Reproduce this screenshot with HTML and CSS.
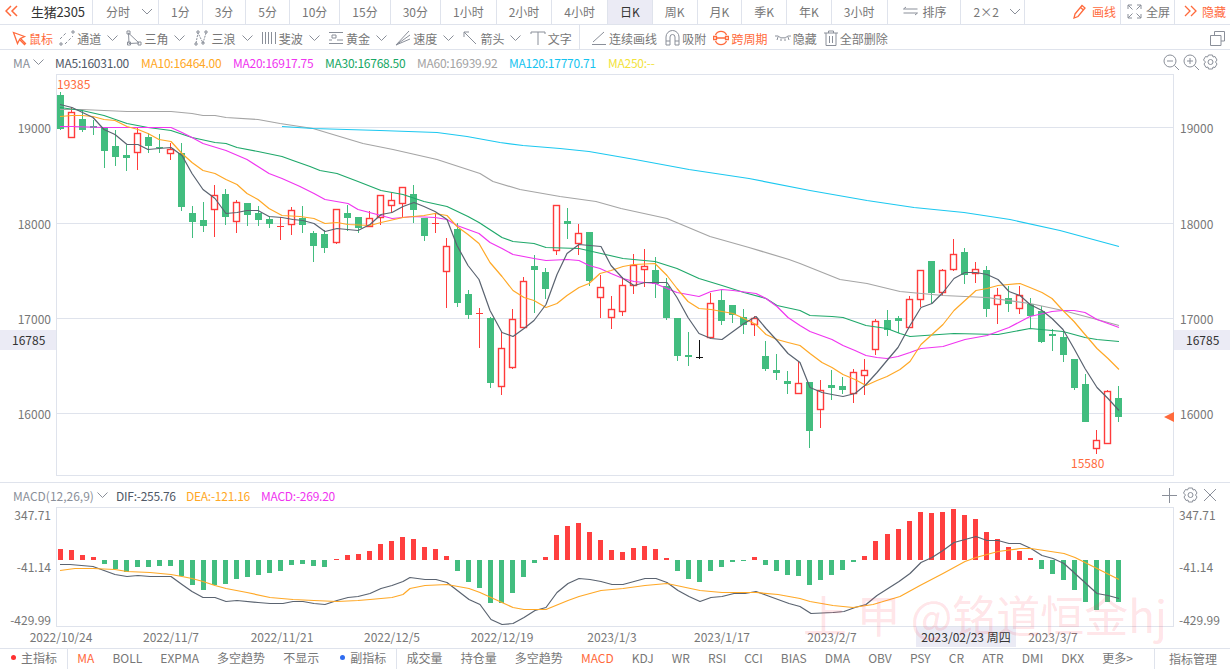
FILE: index.html
```html
<!DOCTYPE html>
<html lang="zh-CN">
<head>
<meta charset="utf-8">
<title>生猪2305</title>
<link rel="stylesheet" href="styles.css">
</head>
<body>
<div class="app">
  <header class="periods">
    <div class="name-cell">
      <svg class="ico-back" width="14" height="12" viewBox="0 0 14 12"><path d="M6 1L1 6l5 5M12 1L7 6l5 5"/></svg>
      <span class="name">生猪2305</span>
    </div>
    <div class="tab tab-wide">分时<svg class="chev chev-tab" width="12" height="7" viewBox="0 0 12 7"><path d="M1 1l5 5 5-5"/></svg></div>
    <div class="tab">1分</div><div class="tab">3分</div><div class="tab">5分</div>
    <div class="tab">10分</div><div class="tab">15分</div><div class="tab">30分</div>
    <div class="tab">1小时</div><div class="tab">2小时</div><div class="tab">4小时</div>
    <div class="tab tab-active">日K</div><div class="tab">周K</div><div class="tab">月K</div><div class="tab">季K</div><div class="tab">年K</div>
    <div class="tab">3小时</div>
    <div class="tab tab-icon"><svg class="ico" width="15" height="10" viewBox="0 0 15 10"><path d="M3 1L0.5 3H14.500M12 9l2.500-2H0.5"/></svg>排序</div>
    <div class="tab tab-grid">2×2<svg class="chev" width="12" height="7" viewBox="0 0 12 7"><path d="M1 1l5 5 5-5"/></svg></div>
    <div class="periods-right">
      <div class="tab tab-orange tab-draw"><svg class="ico-o" width="15" height="15" viewBox="0 0 15 15"><path d="M3 10l7-8.500 3 2.500-7 8.500-4 1.500zM8.500 3.500l3 2.500"/></svg>画线</div>
      <div class="tab tab-full"><svg class="ico" width="15" height="15" viewBox="0 0 15 15"><path d="M1 5V1h4M10 1h4v4M14 10v4h-4M5 14H1v-4M1 1l4.500 4.500M14 1L9.500 5.500M14 14L9.500 9.500M1 14l4.500-4.500"/></svg>全屏</div>
      <div class="tab tab-orange tab-hide"><svg class="ico-o" width="14" height="12" viewBox="0 0 14 12"><path d="M2 1l5 5-5 5M8 1l5 5-5 5"/></svg>隐藏</div>
    </div>
  </header>

  <nav class="tools">
    <div class="tool tool-on tool-first"><svg class="ico-o" width="15" height="15" viewBox="0 0 15 15"><path d="M1.500 1.500l4 11 2-4 5 5 1-1-5-5 4-2z"/></svg>鼠标</div>
    <div class="tool"><svg class="ico" width="16" height="16" viewBox="0 0 16 16"><path d="M1 9l7-7M6 14l8-8" stroke-dasharray="3 2"/><path d="M13 1h2v2h-2zM1 13h2v2H1z"/></svg>通道<svg class="chev" width="11" height="7" viewBox="0 0 11 7"><path d="M.5.500l5 5 5-5"/></svg></div>
    <div class="tool"><svg class="ico" width="16" height="16" viewBox="0 0 16 16"><path d="M2.500 3L3 13.500 13 13zM1 1h3v3H1zM1.500 12h3v3h-3zM12 12h3v3h-3z"/></svg>三角<svg class="chev" width="11" height="7" viewBox="0 0 11 7"><path d="M.5.500l5 5 5-5"/></svg></div>
    <div class="tool"><svg class="ico" width="16" height="16" viewBox="0 0 16 16"><path d="M2 13L4 3l5 10 3-10" stroke-dasharray="2 1"/><path d="M1 13h2v2H1zM3 1h2v2H3zM8 12h2v2H8zM11 1h2v2h-2z"/></svg>三浪<svg class="chev" width="11" height="7" viewBox="0 0 11 7"><path d="M.5.500l5 5 5-5"/></svg></div>
    <div class="tool"><svg class="ico" width="16" height="16" viewBox="0 0 16 16"><path d="M1.500 2v12M4.500 2v12M7.500 2v12M10.500 2v12M14.500 2v12"/></svg>斐波<svg class="chev" width="11" height="7" viewBox="0 0 11 7"><path d="M.5.500l5 5 5-5"/></svg></div>
    <div class="tool"><svg class="ico" width="16" height="16" viewBox="0 0 16 16"><path d="M1 2.500h14M1 13.500h14M1 10h3M9 10h6M4 5h4v3H4z"/></svg>黄金<svg class="chev" width="11" height="7" viewBox="0 0 11 7"><path d="M.5.500l5 5 5-5"/></svg></div>
    <div class="tool"><svg class="ico" width="16" height="16" viewBox="0 0 16 16"><path d="M1 15L14 1M1 15L15 5M1 15L15 9M3 13h2"/></svg>速度<svg class="chev" width="11" height="7" viewBox="0 0 11 7"><path d="M.5.500l5 5 5-5"/></svg></div>
    <div class="tool"><svg class="ico" width="16" height="16" viewBox="0 0 16 16"><path d="M2 7V2h5M2 2l12 12"/></svg>箭头<svg class="chev" width="11" height="7" viewBox="0 0 11 7"><path d="M.5.500l5 5 5-5"/></svg></div>
    <div class="tool"><svg class="ico" width="16" height="16" viewBox="0 0 16 16"><path d="M1 2h14M8 2v13M1 2v2M15 2v2"/></svg>文字</div>
    <div class="tool-sep"></div>
    <div class="tool"><svg class="ico" width="16" height="16" viewBox="0 0 16 16"><path d="M2 12L13 2M1 14.500h14"/></svg>连续画线</div>
    <div class="tool"><svg class="ico" width="15" height="16" viewBox="0 0 15 16"><path d="M1 15V7a6.500 6.500 0 0 1 13 0v8h-4V7a2.500 2.500 0 0 0-5 0v8zM1 11h4M10 11h4"/></svg>吸附</div>
    <div class="tool tool-on tool-tight"><svg class="ico-o" width="16" height="16" viewBox="0 0 16 16"><path d="M2.500 5a6 6 0 0 1 11 0M2.500 11a6 6 0 0 0 11 0M4 8h8M.5 6.500h3v3h-3zM12.500 6.500h3v3h-3z"/></svg>跨周期</div>
    <div class="tool tool-tight"><svg class="ico" width="16" height="16" viewBox="0 0 16 16"><path d="M0 6h3c3 2.500 7 2.500 10 0h3M3 7l-1 3M6 8.500V11M10 8.500V11M13 7l1 3"/></svg>隐藏</div>
    <div class="tool tool-tight"><svg class="ico" width="14" height="16" viewBox="0 0 14 16"><path d="M0 3h14M4.500 3V1h5v2M2 3v12.500h10V3M5.500 6v7M8.500 6v7"/></svg>全部删除</div>
    <svg class="ico ico-layers" width="15" height="15" viewBox="0 0 15 15"><path d="M4.500 4V.5h10V10H11M.5 4.500H11v10H.500z"/></svg>
  </nav>

  <div class="legend">
    <span class="leg-name leg-ma">MA<svg class="chev" width="11" height="7" viewBox="0 0 11 7"><path d="M.5.500l5 5 5-5"/></svg></span>
    <span class="val c-dif w-ma5">MA5:16031.00</span>
    <span class="val c-o w-ma10">MA10:16464.00</span>
    <span class="val c-m w-ma10">MA20:16917.75</span>
    <span class="val c-g w-ma10">MA30:16768.50</span>
    <span class="val c-gray w-ma10">MA60:16939.92</span>
    <span class="val c-c w-ma120">MA120:17770.71</span>
    <span class="val c-y">MA250:--</span>
    <span class="leg-icons">
      <svg class="ico" width="17" height="17" viewBox="0 0 17 17"><circle cx="7" cy="7" r="6"/><path d="M4 7h6M11.500 11.500L16 16"/></svg>
      <svg class="ico" width="17" height="17" viewBox="0 0 17 17"><circle cx="7" cy="7" r="6"/><path d="M4 7h6M7 4v6M11.500 11.500L16 16"/></svg>
      <svg class="ico" width="15" height="16" viewBox="0 0 15 16"><path d="M5.500 1h4l.5 2 2-.5 2 3.500-1.500 2 1.500 2-2 3.500-2-.5-.5 2h-4l-.5-2-2 .5-2-3.500 1.500-2L.5 6l2-3.500 2 .5z"/><circle cx="7.500" cy="8" r="2.500"/></svg>
    </span>
  </div>
  <svg id="kchart" class="chart chart-k" width="1230" height="408" viewBox="0 74 1230 408"></svg>

  <div class="legend legend-sub">
    <span class="leg-name leg-macd">MACD(12,26,9)<svg class="chev" width="11" height="7" viewBox="0 0 11 7"><path d="M.5.500l5 5 5-5"/></svg></span>
    <span class="val c-dif w-dif">DIF:-255.76</span>
    <span class="val c-o w-dea">DEA:-121.16</span>
    <span class="val c-m">MACD:-269.20</span>
    <span class="leg-icons leg-icons-sub">
      <svg class="ico" width="15" height="15" viewBox="0 0 15 15"><path d="M0 7.500h15M7.500 0v15"/></svg>
      <svg class="ico" width="15" height="16" viewBox="0 0 15 16"><path d="M5.500 1h4l.5 2 2-.5 2 3.500-1.500 2 1.500 2-2 3.500-2-.5-.5 2h-4l-.5-2-2 .5-2-3.500 1.500-2L.5 6l2-3.500 2 .5z"/><circle cx="7.500" cy="8" r="2.500"/></svg>
      <svg class="ico" width="12" height="12" viewBox="0 0 12 12"><path d="M0 0l12 12M12 0L0 12"/></svg>
    </span>
  </div>
  <svg id="macdchart" class="chart chart-macd" width="1230" height="141" viewBox="0 507 1230 141"></svg>

  <footer class="indicators">
    <span class="dot dot-red"></span><span class="ind ind-head">主指标</span>
    <span class="ind-sep"></span>
    <span class="ind ind-on">MA</span><span class="ind">BOLL</span><span class="ind">EXPMA</span><span class="ind">多空趋势</span><span class="ind">不显示</span>
    <span class="dot dot-blue"></span><span class="ind ind-head">副指标</span>
    <span class="ind-sep"></span>
    <span class="ind">成交量</span><span class="ind">持仓量</span><span class="ind">多空趋势</span><span class="ind ind-on">MACD</span><span class="ind">KDJ</span><span class="ind">WR</span><span class="ind">RSI</span><span class="ind">CCI</span><span class="ind">BIAS</span><span class="ind">DMA</span><span class="ind">OBV</span><span class="ind">PSY</span><span class="ind">CR</span><span class="ind">ATR</span><span class="ind">DMI</span><span class="ind">DKX</span><span class="ind">更多&gt;</span>
    <span class="manage">指标管理</span>
  </footer>

  <div class="watermark">上 甲 @铭道恒金hj</div>
</div>
<script src="script.js"></script>
</body>
</html>
```
FILE: styles.css
```css
* { box-sizing: border-box; }
html, body { margin: 0; padding: 0; background: #fff; }
body {
  font-family: "Noto Sans CJK SC", "Noto Sans", sans-serif;
  font-size: 12px;
  color: #777;
  overflow: hidden;
}
.app { position: relative; width: 1230px; height: 669px; overflow: hidden; }

.ico { fill: none; stroke: #8a8f99; stroke-width: 1; flex: none; }
.ico-o { fill: none; stroke: #ff6a3c; stroke-width: 1.3; flex: none; }
.ico-back { fill: none; stroke: #ff6a3c; stroke-width: 1.5; flex: none; }
.chev { fill: none; stroke: #8a8f99; stroke-width: 1; flex: none; }

/* period tabs */
.periods {
  display: flex;
  height: 25px;
  border-bottom: 1px solid #dfe3ec;
}
.name-cell {
  display: flex;
  align-items: center;
  gap: 12px;
  width: 93px;
  padding: 0 0 2px 5px;
  border-right: 1px solid #dfe3ec;
}
.name { color: #333; font-size: 13px; letter-spacing: -.2px; }
.tab {
  display: flex;
  align-items: center;
  justify-content: center;
  padding: 0 12px 2px;
  border-right: 1px solid #dfe3ec;
  white-space: nowrap;
}
.tab-wide { width: 66px; padding-left: 13px; padding-right: 0; justify-content: flex-start; }
.chev-tab { margin-left: 11px; }
.tab-active { background: #ebebf5; color: #333; }
.tab-icon { width: 73px; padding-left: 15px; padding-right: 0; gap: 5px; justify-content: flex-start; }
.tab-grid { width: 64px; padding-left: 13px; padding-right: 0; gap: 10px; justify-content: flex-start; }
.periods-right { display: flex; margin-left: auto; }
.tab-orange { color: #ff6a3c; }
.tab-draw { width: 64px; padding-left: 0; padding-right: 4px; gap: 5px; justify-content: flex-end; }
.tab-full { width: 54px; padding-left: 6px; padding-right: 0; gap: 4px; justify-content: flex-start; }
.tab-hide { width: 55px; padding-left: 8px; padding-right: 0; gap: 5px; border-right: 0; justify-content: flex-start; }

/* drawing tools */
.tools {
  display: flex;
  align-items: center;
  gap: 8.2px;
  height: 25px;
  padding: 2px 0 0 12px;
  border-bottom: 1px solid #dfe3ec;
}
.tool { display: flex; align-items: center; gap: 2px; white-space: nowrap; }
.tool .chev { margin-left: 4px; }
.tool-on { color: #ff6a3c; }
.tool-first { margin-right: -2px; }
.tool-tight { margin-left: -1px; }
.tool-sep { width: 1px; height: 24px; background: #dfe3ec; margin: -2px 3px 0 -1px; }
.ico-layers { margin-left: auto; margin-right: 5px; }

/* indicator legends */
.legend {
  display: flex;
  align-items: center;
  height: 24px;
  padding-left: 13px;
  white-space: nowrap;
}
.legend-sub { border-top: 1px solid #dfe3ec; height: 25px; }
.leg-name { display: flex; align-items: center; gap: 3px; color: #8a8f99; }
.leg-ma { width: 42px; }
.leg-macd { width: 103px; }
.val { letter-spacing: -.25px; }
.w-ma5 { width: 86px; }
.w-ma10 { width: 92px; }
.w-ma120 { width: 99px; }
.w-dif { width: 70px; }
.w-dea { width: 75px; }
.c-dif { color: #4f5866; }
.c-o { color: #ffa826; }
.c-m { color: #f035f0; }
.c-g { color: #16a765; }
.c-gray { color: #a3a3a3; }
.c-c { color: #16c4f0; }
.c-y { color: #f2e33c; }
.leg-icons {
  display: flex;
  align-items: center;
  gap: 3px;
  margin-left: auto;
  margin-right: 12px;
}
.leg-icons-sub { gap: 6px; margin-right: 14px; }

/* charts */
.chart { display: block; }
.chart text { font-family: "Noto Sans CJK SC", "Noto Sans", sans-serif; font-size: 12px; fill: #777; }
.chart .grid { stroke: #dfe3ec; stroke-width: 1; }
.chart .frame { stroke: #dfe3ec; stroke-width: 1; fill: none; }
.chart .line { fill: none; stroke-width: 1.2; stroke-linejoin: round; }
.chart .l-ma5 { stroke: #5a6370; }
.chart .l-ma10 { stroke: #ffa826; }
.chart .l-ma20 { stroke: #f035f0; }
.chart .l-ma30 { stroke: #1fa86a; }
.chart .l-ma60 { stroke: #a5a5a5; }
.chart .l-ma120 { stroke: #1cc8f0; }
.chart .up { fill: #fff; stroke: #ff3b3b; stroke-width: 1.4; }
.chart .up-w { fill: #ff3b3b; }
.chart .down { fill: #42bd7f; }
.chart .blk { fill: #111; }
.chart .bar-up { fill: #ff3f3f; }
.chart .bar-down { fill: #42bd7f; }
.chart .extreme { fill: #ff6a3c; }
.chart .tag-bg { fill: #ebebf5; }
.chart .tag-text { fill: #333; }
.chart .mark { fill: #ff6a3c; }

/* indicator bar */
.indicators {
  display: flex;
  align-items: center;
  gap: 18.1px;
  height: 21px;
  padding: 0 0 3px 11px;
  border-top: 1px solid #dfe3ec;
  white-space: nowrap;
}
.ind { color: #777; }
.ind-on { color: #ff6a3c; }
.ind-head { margin-left: -13px; }
.dot { width: 5px; height: 5px; border-radius: 50%; flex: none; }
.dot-red { background: #ff3030; }
.dot-blue { background: #2f6cf0; margin-left: 3px; }
.ind-sep { align-self: flex-start; width: 1px; height: 20px; background: #dfe3ec; margin: 0 -9px 0 -8px; }
.manage {
  align-self: flex-start;
  margin-left: auto;
  height: 20px;
  width: 76px;
  padding-left: 14px;
  line-height: 20px;
  border-left: 1px solid #dfe3ec;
}

/* watermark sits over the chart */
.watermark {
  position: absolute;
  left: 803px;
  top: 589px;
  font-size: 44px;
  line-height: 50px;
  color: rgba(255, 60, 80, .15);
  white-space: nowrap;
  pointer-events: none;
}
```
FILE: script.js
```js
// [top of body, bottom of body, wick top, wick bottom, kind]: u = rising (hollow), d = falling, b = flat black
var candles = [
[95,129,92,130,'d'],[112,137,107,137,'u'],[119,130,110,132,'d'],[126,128,120,135,'d'],[127,151,127,168,'d'],
[146,157,130,166,'d'],[155,158,145,171,'d'],[133,152,128,170,'u'],[137,146,133,153,'d'],[147,148,134,153,'d'],
[149,153,143,160,'u'],[153,207,143,211,'d'],[213,222,206,238,'d'],[220,226,202,232,'d'],[195,209,185,237,'u'],
[194,217,189,225,'d'],[202,221,200,233,'u'],[203,215,203,226,'d'],[213,220,206,226,'d'],[219,224,216,228,'d'],
[226,226,217,240,'u'],[210,224,207,235,'u'],[218,225,206,233,'d'],[233,246,231,262,'d'],[234,248,230,253,'d'],
[209,242,209,244,'u'],[213,218,205,231,'d'],[217,228,217,233,'d'],[218,226,211,226,'u'],[195,217,195,225,'u'],
[200,205,193,213,'u'],[187,203,187,217,'u'],[194,210,185,223,'d'],[218,236,218,241,'d'],[223,223,213,233,'u'],
[246,271,238,308,'u'],[229,303,223,307,'d'],[294,315,290,319,'d'],[313,313,308,348,'u'],[318,383,317,388,'d'],
[348,386,332,395,'u'],[319,367,309,369,'u'],[281,327,277,327,'u'],[266,270,255,313,'d'],[272,289,268,299,'d'],
[205,250,205,255,'u'],[221,224,208,239,'d'],[233,243,224,255,'u'],[232,281,232,286,'d'],[287,297,275,318,'u'],
[309,317,296,329,'u'],[285,311,277,316,'u'],[265,285,254,294,'u'],[266,269,249,287,'u'],[270,284,257,298,'d'],
[286,318,278,320,'d'],[318,356,318,361,'d'],[355,357,332,366,'d'],[357,357,340,359,'b'],[303,337,293,337,'u'],
[300,321,290,325,'d'],[305,315,305,323,'d'],[317,325,309,334,'d'],[318,324,316,336,'u'],[356,369,341,371,'d'],
[370,373,354,380,'d'],[381,384,371,394,'d'],[383,393,361,393,'u'],[382,431,382,448,'d'],[390,409,380,428,'u'],
[385,388,370,400,'d'],[386,390,377,394,'d'],[372,393,369,403,'u'],[370,375,359,395,'u'],[321,349,319,355,'u'],
[320,330,310,336,'d'],[318,321,316,333,'d'],[299,327,296,327,'u'],[270,299,270,307,'u'],[261,293,261,304,'d'],
[270,292,269,296,'u'],[254,269,239,271,'u'],[252,275,248,284,'d'],[269,273,262,283,'u'],[270,309,266,317,'d'],
[295,304,288,324,'u'],[298,304,286,312,'d'],[295,308,286,314,'u'],[304,316,298,328,'d'],[311,342,306,343,'d'],
[334,336,329,351,'d'],[337,355,332,362,'d'],[359,388,359,390,'d'],[384,422,374,422,'d'],[440,448,430,454,'u'],
[391,443,390,443,'u'],[398,417,386,422,'d']
];

var lines = {
ma60:[60,109,82,109,104,110,127,111,171,111,192,113,203,115,215,115,226,117,258,119,269,121,280,123,313,128,363,143,393,149,437,159,480,173,493,181,520,189,560,196,596,201,621,208,667,218,710,236,749,247,789,259,800,263,840,279,867,283,900,291,943,295,987,297,1030,303,1063,310,1097,319,1119,325],
ma120:[282,126,313,128,380,130,437,132,467,136,500,142,523,145,560,148,589,151,635,159,689,169,749,178,810,190,867,200,914,207,964,212,1010,219,1060,230,1119,246],
ma30:[60,107,82,110,104,115,127,123,148,127,171,130,192,137,215,142,226,143,237,147,258,151,282,156,293,160,310,166,320,170,337,173,358,181,381,190,403,194,424,201,447,206,468,216,479,222,502,237,513,241,534,243,546,247,579,248,601,253,623,258,655,261,677,268,699,278,722,285,744,292,766,298,777,305,800,310,810,315,832,316,843,317,866,325,887,328,900,333,910,336,954,333,998,334,1030,328,1052,330,1063,331,1085,337,1097,339,1119,341],
ma20:[60,126,72,126,104,127,138,127,171,127,182,132,192,137,203,143,226,150,247,159,258,166,269,173,282,178,300,186,314,193,325,199,348,203,358,209,381,215,392,218,413,216,435,217,447,219,457,225,479,233,490,242,502,248,513,254,534,258,546,260,567,259,579,260,589,265,600,268,611,273,623,278,634,281,655,283,667,288,677,292,688,294,699,296,711,291,722,289,733,290,756,293,766,298,777,306,788,317,800,325,810,331,832,339,843,345,855,350,866,355,877,357,887,358,898,356,910,352,921,348,943,346,965,339,987,335,1009,327,1030,316,1052,311,1063,310,1074,310,1085,312,1097,319,1119,327],
ma10:[60,116,72,115,82,115,93,116,104,119,115,120,127,126,138,129,148,133,159,139,171,141,182,153,192,162,203,170,215,173,226,179,237,184,247,193,258,199,269,208,282,215,300,216,314,218,325,223,337,222,348,224,370,225,381,222,403,217,424,215,435,213,447,215,457,226,468,234,479,243,490,262,502,276,513,290,524,297,534,300,546,307,557,303,567,295,579,287,589,283,600,273,611,270,623,266,634,264,655,263,667,275,677,288,688,301,699,308,711,309,733,313,744,318,756,324,766,334,777,339,788,342,800,345,810,353,822,362,832,367,843,374,855,379,866,385,877,380,887,376,900,369,910,361,921,344,943,324,954,310,965,300,976,290,987,288,998,285,1020,283,1030,287,1042,292,1052,298,1063,310,1074,321,1085,334,1097,348,1108,358,1119,369],
ma5:[60,104,72,107,93,117,104,129,115,134,127,144,138,144,148,149,159,148,171,147,182,155,192,173,203,189,215,198,226,213,237,212,247,210,258,210,269,216,282,217,293,219,303,220,314,223,325,231,337,228,358,230,370,224,381,214,392,212,403,206,414,202,424,206,435,211,447,219,457,245,468,265,479,279,490,310,502,332,513,336,524,328,534,320,546,304,557,274,567,253,579,244,601,246,611,265,623,278,634,285,645,282,667,282,677,297,688,317,699,333,711,338,722,339,733,331,744,323,756,316,766,328,777,340,788,353,800,362,810,387,822,392,832,394,843,396,855,393,866,384,877,372,887,360,898,347,910,325,921,307,932,303,943,292,954,278,965,272,976,272,987,274,998,279,1009,291,1020,295,1030,304,1042,310,1052,318,1063,329,1074,348,1085,368,1097,387,1108,398,1119,410]
};

var bars = [11,10,5,3,-4,-9,-12,-7,-7,-6,-6,-16,-25,-30,-25,-24,-19,-17,-15,-13,-11,-5,-4,-6,-7,1,5,6,9,16,19,23,21,13,11,4,-11,-22,-28,-43,-43,-33,-17,-3,3,25,34,37,28,20,10,8,12,14,11,2,-11,-19,-22,-11,-7,-2,-1,3,-5,-11,-15,-16,-25,-20,-15,-10,-2,4,19,26,31,39,48,47,48,51,45,41,28,21,13,9,2,-9,-14,-20,-30,-42,-50,-42,-42];

var dif = [60,564,70,564,93,566,115,574,127,576,138,575,150,576,171,576,182,584,192,591,203,597,215,597,226,601,237,600,258,602,270,603,283,603,293,601,303,601,314,603,325,604,337,600,348,597,358,596,370,593,381,588,392,585,403,581,410,577,425,579,436,579,447,582,469,599,480,604,491,619,502,624,513,623,524,617,535,610,546,607,557,592,568,583,579,578,590,579,601,581,612,584,623,584,634,581,645,578,656,578,667,582,678,590,689,596,700,601,711,597,722,596,734,593,745,593,756,591,767,595,778,599,789,603,800,606,811,613,833,612,844,611,855,607,866,604,877,595,888,588,899,581,910,573,921,562,932,557,943,550,954,542,965,539,976,536,987,540,998,540,1009,543,1020,543,1031,548,1042,555,1053,558,1064,563,1075,573,1086,583,1097,593,1108,595,1119,598];
var dea = [60,570,75,568,93,568,115,569,127,571,150,572,171,574,182,576,192,578,203,581,215,585,226,588,247,592,270,597,293,599,314,600,337,601,358,600,370,599,392,597,403,594,410,588,425,585,447,584,469,588,480,592,502,602,513,607,524,609,546,609,568,600,579,596,601,590,623,588,645,585,667,583,700,590,722,592,756,592,778,594,800,598,810,601,833,605,853,607,873,604,900,596,920,585,943,573,965,561,976,557,998,551,1020,548,1031,548,1064,553,1075,557,1097,568,1119,579];

function cx(i) { return Math.round(60 + 11.02 * i); }
function poly(a, cls) {
  var p = [];
  for (var i = 0; i < a.length; i += 2) p.push(a[i] + ',' + (a[i + 1] + 0.5));
  return '<polyline class="line ' + cls + '" points="' + p.join(' ') + '"/>';
}
function hline(y) { return '<line class="grid" x1="57" x2="1173" y1="' + y + '" y2="' + y + '"/>'; }
function text(x, y, s, anchor, cls) {
  return '<text x="' + x + '" y="' + y + '"' + (anchor ? ' text-anchor="' + anchor + '"' : '') + (cls ? ' class="' + cls + '"' : '') + '>' + s + '</text>';
}

var k = '';
k += '<rect class="frame" x="56.5" y="74.5" width="1117" height="401"/>';
[128, 224, 319, 414].forEach(function (y, n) {
  var lab = ['19000', '18000', '17000', '16000'][n];
  k += hline(y - 0.5);
  k += text(51, y + 5, lab, 'end') + text(1180, y + 5, lab);
});
k += '<rect class="tag-bg" x="0" y="330" width="56" height="20"/><rect class="tag-bg" x="1174" y="330" width="56" height="20"/>';
k += text(12, 345, '16785', '', 'tag-text') + text(1186, 345, '16785', '', 'tag-text');
k += '<path class="mark" d="M1164 417l10-5v10z"/>';
candles.forEach(function (c, i) {
  var x = cx(i), kind = c[4];
  var wick = kind === 'u' ? 'up-w' : kind === 'b' ? 'blk' : 'down';
  k += '<rect class="' + wick + '" x="' + x + '" y="' + c[2] + '" width="1" height="' + (c[3] - c[2]) + '"/>';
  if (c[0] === c[1]) {
    k += '<rect class="' + wick + '" x="' + (x - 3) + '" y="' + c[0] + '" width="7" height="1"/>';
  } else if (kind === 'u') {
    k += '<rect class="up" x="' + (x - 2.5) + '" y="' + (c[0] + 0.5) + '" width="6" height="' + (c[1] - c[0]) + '"/>';
  } else {
    k += '<rect class="down" x="' + (x - 3) + '" y="' + c[0] + '" width="7" height="' + (c[1] - c[0]) + '"/>';
  }
});
['ma60', 'ma120', 'ma30', 'ma20', 'ma10', 'ma5'].forEach(function (n) { k += poly(lines[n], 'l-' + n); });
k += text(57, 89, '19385', '', 'extreme') + text(1071, 468, '15580', '', 'extreme');
document.getElementById('kchart').innerHTML = k;

var m = '';
m += '<rect class="frame" x="56.5" y="507.5" width="1117" height="119"/>';
[['347.71', 520], ['-41.14', 572], ['-429.99', 625]].forEach(function (l) {
  m += text(51, l[1], l[0], 'end') + text(1179, l[1], l[0]);
});
bars.forEach(function (v, i) {
  var x = cx(i) - 2;
  var y = v > 0 ? 560 - v : 560;
  m += '<rect class="' + (v > 0 ? 'bar-up' : 'bar-down') + '" x="' + x + '" y="' + y + '" width="5" height="' + Math.abs(v) + '"/>';
});
m += poly(dif, 'l-ma5') + poly(dea, 'l-ma10');
[['2022/10/24', 61], ['2022/11/7', 171], ['2022/11/21', 282], ['2022/12/5', 392], ['2022/12/19', 502], ['2023/1/3', 612], ['2023/1/17', 722], ['2023/2/7', 832], ['2023/3/7', 1053]].forEach(function (d) {
  m += text(d[1], 642, d[0], 'middle');
});
m += '<rect class="tag-bg" x="916" y="627" width="100" height="20"/>';
m += text(966, 642, '2023/02/23 周四', 'middle', 'tag-text');
document.getElementById('macdchart').innerHTML = m;
```
